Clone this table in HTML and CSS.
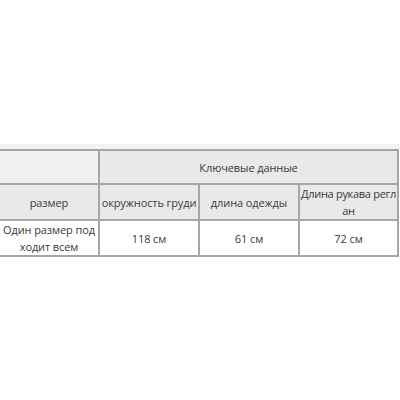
FILE: index.html
```html
<!DOCTYPE html>
<html>
<head>
<meta charset="utf-8">
<link rel="stylesheet" href="styles.css">
</head>
<body>
<div class="page">
  <div class="band"></div>
  <table class="sizes">
    <colgroup>
      <col class="c1"><col class="c2"><col class="c3"><col class="c4">
    </colgroup>
    <tr class="head">
      <td class="blank"></td>
      <td colspan="3">Ключевые данные</td>
    </tr>
    <tr class="head">
      <td>размер</td>
      <td>окружность груди</td>
      <td>длина одежды</td>
      <td class="tight">Длина рукава регл<br>ан</td>
    </tr>
    <tr class="data">
      <td>Один размер под<br>ходит всем</td>
      <td>118 см</td>
      <td>61 см</td>
      <td>72 см</td>
    </tr>
  </table>
</div>
</body>
</html>
```
FILE: styles.css
```css
html, body {
  margin: 0;
  padding: 0;
  background: #ffffff;
}
.page {
  padding-top: 144px;
  overflow: hidden;
  width: 400px;
}
.band {
  height: 5px;
  background: #f3f3f3;
}
.sizes {
  border-collapse: collapse;
  margin-left: -2px;
  table-layout: fixed;
  width: 399px;
  font-family: "Open Sans", "Noto Sans", sans-serif;
  font-size: 11px;
  letter-spacing: -0.1px;
  color: #3a3a3a;
}
.c1 { width: 100px; }
.c2 { width: 100px; }
.c3 { width: 100px; }
.c4 { width: 99px; }
.sizes td {
  border: 2px solid #a6a6a6;
  text-align: center;
  vertical-align: middle;
  height: 32px;
  padding: 0;
  line-height: 17px;
  white-space: nowrap;
}
.sizes td.tight {
  letter-spacing: -0.3px;
}
.head td {
  background: #e9e9e9;
}
.head td.blank {
  background: #f1f1f1;
}
.data td {
  background: #ffffff;
}
```
